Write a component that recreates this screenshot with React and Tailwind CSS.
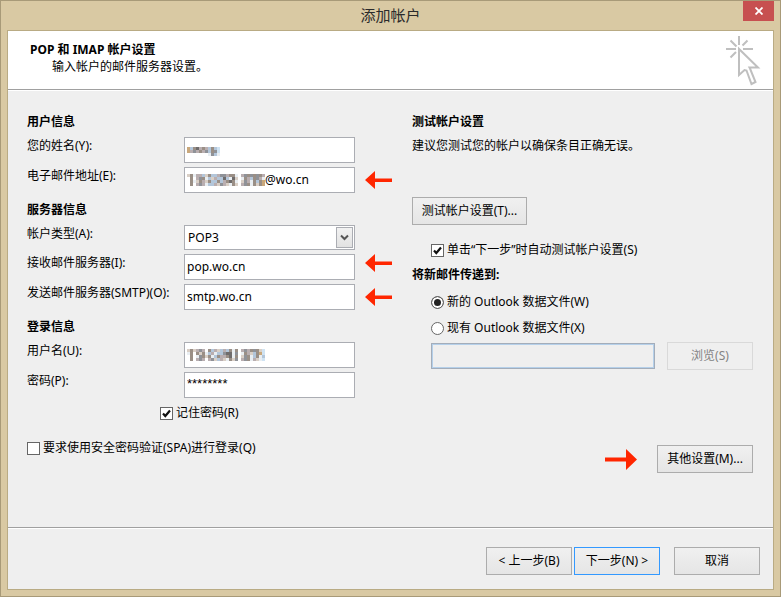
import { useState } from 'react';

const PALETTE = {
  a: '#8f9298',
  b: '#b3c6da',
  c: '#d9cfc6',
  d: '#6f6c6c',
  e: '#e9eef2',
  f: '#c9a87c',
  g: '#b9aeb0',
  h: '#9a8f86',
  i: '#cfe3f3',
};

const NAME_MASK = ['...........', 'fbhdghgbhbi', 'fgaghgabhai', '.......eabe'];
const EMAIL_MASK = ['cheggbchbbgaaghhe.gahahahg', '.h.gahebcgbbdbedc.ehgbhage', '.hechgchbbhbghdhe.cagehbhf', '.h.gagebbgcagcehc.gahehchf'];
const USER_MASK = ['chcgag.hbgcbgbheh.gaghahci', 'eh.hchebgebbaddea.ehgcbhfi', '.h.eahchebhgghdeh.cahebheb', '.h.gag.gacbgcehca.gahegcei'];

// Pixelated cover for private values
function Mosaic({ rows }) {
  return (
    <svg
      className="absolute left-[3px] top-1/2 -translate-y-1/2"
      width={rows[0].length * 3}
      height={rows.length * 3}
      shapeRendering="crispEdges"
      aria-hidden="true"
    >
      {rows.map((row, y) =>
        row.split('').map((key, x) =>
          PALETTE[key] ? <rect key={`${x}-${y}`} x={x * 3} y={y * 3} width="3" height="3" fill={PALETTE[key]} /> : null
        )
      )}
    </svg>
  );
}

function ArrowLeft() {
  return (
    <svg className="shrink-0" width="27" height="18" viewBox="0 0 27 18" aria-hidden="true">
      <path d="M0 9 10 0v7.5h17v3.5H10v7z" fill="#ff2600" />
    </svg>
  );
}

function ArrowRight() {
  return (
    <svg className="shrink-0" width="32" height="22" viewBox="0 0 32 22" aria-hidden="true">
      <path d="M32 11.5 21 1v8.500H0v4h21v8.500z" fill="#ff2600" />
    </svg>
  );
}

function Field({ id, label, arrow, arrowTop, children }) {
  return (
    <div className="flex items-start pr-5">
      <label htmlFor={id} className="w-[157px] shrink-0 whitespace-nowrap">
        {label}
      </label>
      <div className="relative min-w-0 flex-1">{children}</div>
      <div className={`ml-[10px] flex w-[27px] shrink-0 ${arrowTop ? 'self-start' : 'self-center'}`}>
        {arrow && <ArrowLeft />}
      </div>
    </div>
  );
}

const inputClass = 'block h-[26px] w-full border border-[#abadb3] bg-white px-[2px] pb-[2px] text-[12px] outline-none';

function Check({ label, checked, onChange, className }) {
  return (
    <label className={`flex items-center gap-[3px] whitespace-nowrap ${className || ''}`}>
      <span className="grid size-[13px] shrink-0">
        <input
          type="checkbox"
          checked={checked}
          onChange={(e) => onChange(e.target.checked)}
          className="col-start-1 row-start-1 size-[13px] appearance-none border border-[#666] bg-white"
        />
        {checked && (
          <svg className="pointer-events-none col-start-1 row-start-1" width="13" height="13" viewBox="0 0 13 13">
            <path d="M3 6.5 5.3 9 10 3.5" fill="none" stroke="#111" strokeWidth="2.2" />
          </svg>
        )}
      </span>
      {label}
    </label>
  );
}

function Radio({ label, value, current, onChange }) {
  return (
    <label className="flex items-center gap-[3px] whitespace-nowrap">
      <input
        type="radio"
        name="delivery"
        checked={current === value}
        onChange={() => onChange(value)}
        className="size-[13px] shrink-0 appearance-none rounded-full border border-[#666] bg-white checked:bg-[#222] checked:shadow-[inset_0_0_0_2px_#fff]"
      />
      {label}
    </label>
  );
}

function Button({ children, className, disabled }) {
  return (
    <button
      type="button"
      disabled={disabled}
      className={`h-7 shrink-0 whitespace-nowrap border ${
        disabled
          ? 'border-[#d9d9d9] bg-[#efefef] text-[#838383]'
          : 'bg-linear-to-b from-[#f0f0f0] to-[#e5e5e5]'
      } ${className}`}
    >
      {children}
    </button>
  );
}

export default function App() {
  const [account, setAccount] = useState('POP3');
  const [pop, setPop] = useState('pop.wo.cn');
  const [smtp, setSmtp] = useState('smtp.wo.cn');
  const [email, setEmail] = useState('@wo.cn');
  const [password, setPassword] = useState('********');
  const [remember, setRemember] = useState(true);
  const [spa, setSpa] = useState(false);
  const [autoTest, setAutoTest] = useState(true);
  const [delivery, setDelivery] = useState('new');

  return (
    <div className="flex min-h-screen flex-col border border-[#a89a78] bg-[#d9c9a3] px-[6px] pb-[6px] font-['Noto_Sans','Noto_Sans_CJK_SC',sans-serif] text-[12px] leading-[18px] text-black">
      <div className="grid h-[29px] grid-cols-[1fr_auto_1fr] items-start">
        <h1 className="col-start-2 text-[15px] leading-[29px] text-[#2b2b2b]">添加帐户</h1>
        <button
          type="button"
          aria-label="关闭"
          className="flex h-5 w-[31px] items-center justify-center justify-self-end bg-[#c75050]"
        >
          <svg width="8" height="8" viewBox="0 0 8 8">
            <path d="M.5.5l7 7M7.5.5l-7 7" stroke="#fff" strokeWidth="1.8" />
          </svg>
        </button>
      </div>

      <div className="flex flex-1 flex-col border border-[#b9ab84] bg-[#efefef]">
        <header className="flex justify-between border-b border-[#a0a0a0] bg-white pl-[22px] pr-3">
          <div className="pb-[14px] pt-[10px] leading-[17px]">
            <h2 className="font-bold">POP 和 IMAP 帐户设置</h2>
            <p className="pl-[22px]">输入帐户的邮件服务器设置。</p>
          </div>
          <svg className="mt-1" width="36" height="52" viewBox="0 0 36 52" fill="none" stroke="#bfbfbf" strokeWidth="2" aria-hidden="true">
            <path d="M14 1v9M1 14h10M18 14h10M5.5 5.5l6 6M22.500 5.500l-5 5M5.500 22.500l5.500-5.500" />
            <path d="M14 14v26l5.500-5 2 .5 5 13.500 4-2-5.500-13.500-.5-.9H33z" />
          </svg>
        </header>

        <main className="grid flex-1 grid-cols-[385fr_341fr] content-start border-t border-white pb-6 pl-[19px] pr-5 pt-[22px]">
          <section>
            <h3 className="font-bold">用户信息</h3>
            <div className="mt-[6px] space-y-1">
              <Field id="name" label="您的姓名(Y):">
                <input id="name" className={inputClass} />
                <Mosaic rows={NAME_MASK} />
              </Field>
              <Field id="email" label="电子邮件地址(E):" arrow>
                <input
                  id="email"
                  value={email}
                  onChange={(e) => setEmail(e.target.value)}
                  className="block h-[26px] w-full border border-[#abadb3] bg-white pb-[2px] pl-[80px] pr-[2px] text-[12px] outline-none"
                />
                <Mosaic rows={EMAIL_MASK} />
              </Field>
            </div>

            <h3 className="mt-2 font-bold">服务器信息</h3>
            <div className="mt-[6px] space-y-1">
              <Field id="type" label="帐户类型(A):">
                <select
                  id="type"
                  value={account}
                  onChange={(e) => setAccount(e.target.value)}
                  className="block h-[25px] w-full appearance-none border border-[#abadb3] bg-white px-[3px] text-[12px] outline-none"
                >
                  <option>POP3</option>
                  <option>IMAP</option>
                </select>
                <span className="pointer-events-none absolute inset-y-[2px] right-[2px] flex w-[17px] items-center justify-center border border-[#abadb3] bg-linear-to-b from-[#f2f2f2] to-[#e2e2e2]">
                  <svg width="9" height="7" viewBox="0 0 9 7">
                    <path d="M1 1.500l3.500 3.500L8 1.500" fill="none" stroke="#555" strokeWidth="2" />
                  </svg>
                </span>
              </Field>
              <Field id="pop" label="接收邮件服务器(I):" arrow arrowTop>
                <input id="pop" value={pop} onChange={(e) => setPop(e.target.value)} className={inputClass} />
              </Field>
              <Field id="smtp" label="发送邮件服务器(SMTP)(O):" arrow>
                <input id="smtp" value={smtp} onChange={(e) => setSmtp(e.target.value)} className={inputClass} />
              </Field>
            </div>

            <h3 className="mt-2 font-bold">登录信息</h3>
            <div className="mt-[6px] space-y-1">
              <Field id="user" label="用户名(U):">
                <input id="user" className={inputClass} />
                <Mosaic rows={USER_MASK} />
              </Field>
              <Field id="password" label="密码(P):">
                <input
                  id="password"
                  value={password}
                  onChange={(e) => setPassword(e.target.value)}
                  className="block h-[26px] w-full border border-[#abadb3] bg-white px-[2px] pb-1 font-['Liberation_Sans',sans-serif] text-[13px] outline-none"
                />
              </Field>
            </div>
            <Check label="记住密码(R)" checked={remember} onChange={setRemember} className="ml-[133px] mt-[6px]" />
            <Check
              label="要求使用安全密码验证(SPA)进行登录(Q)"
              checked={spa}
              onChange={setSpa}
              className="mt-[17px]"
            />
          </section>

          <section>
            <h3 className="font-bold">测试帐户设置</h3>
            <p className="mt-[6px]">建议您测试您的帐户以确保条目正确无误。</p>
            <Button className="mt-[42px] w-[115px] border-[#acacac]">测试帐户设置(T)...</Button>
            <Check
              label="单击“下一步”时自动测试帐户设置(S)"
              checked={autoTest}
              onChange={setAutoTest}
              className="ml-[19px] mt-4"
            />
            <h3 className="mt-[7px] font-bold">将新邮件传递到:</h3>
            <div className="ml-[19px] mt-[9px] space-y-2">
              <Radio label="新的 Outlook 数据文件(W)" value="new" current={delivery} onChange={setDelivery} />
              <Radio label="现有 Outlook 数据文件(X)" value="existing" current={delivery} onChange={setDelivery} />
            </div>
            <div className="ml-[19px] mt-[5px] flex items-center gap-3">
              <input
                aria-label="现有 Outlook 数据文件"
                disabled
                className="h-[26px] min-w-0 flex-1 border border-[#a3adba] bg-[#efefef] shadow-[inset_0_0_0_1px_#b5d0ea]"
              />
              <Button disabled className="w-[86px]">
                浏览(S)
              </Button>
            </div>
            <div className="mt-[75px] flex items-center justify-end gap-5">
              <ArrowRight />
              <Button className="w-[96px] border-[#acacac]">其他设置(M)...</Button>
            </div>
          </section>
        </main>

        <footer className="border-t border-[#a0a0a0]">
          <div className="flex justify-end border-t border-white pb-[14px] pr-[13px] pt-[18px]">
            <Button className="w-[86px] border-[#acacac]">&lt; 上一步(B)</Button>
            <Button className="ml-[2px] w-[86px] border-[#3399ff]">下一步(N) &gt;</Button>
            <Button className="ml-[14px] w-[86px] border-[#acacac]">取消</Button>
          </div>
        </footer>
      </div>
    </div>
  );
}
